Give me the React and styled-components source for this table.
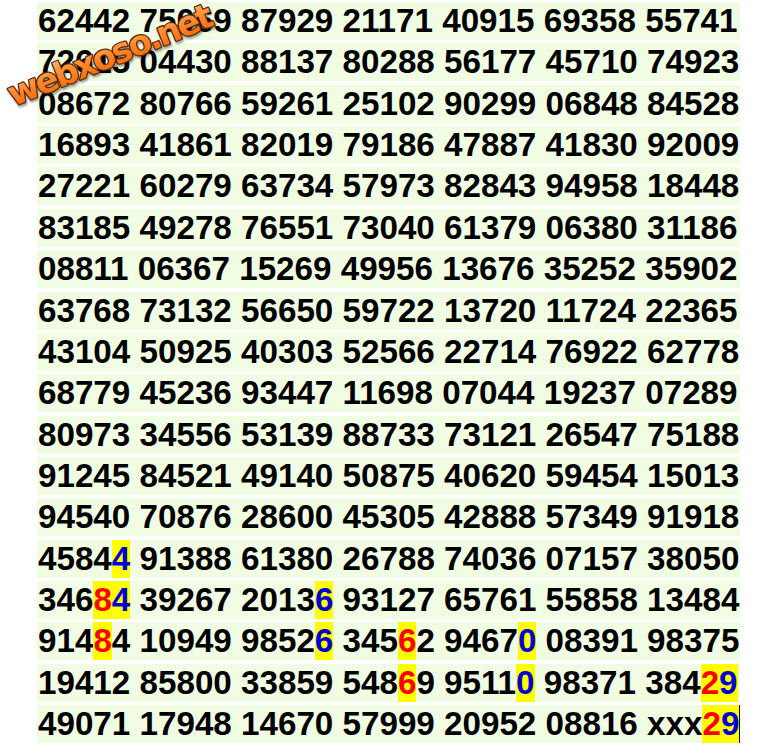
import React from "react";
import styled, { createGlobalStyle } from "styled-components";

const Global = createGlobalStyle`
  html, body { margin: 0; padding: 0; background: #ffffff; }
  body { font-family: "Liberation Sans", Arial, sans-serif; }
`;

const Page = styled.div`
  position: relative;
  width: 768px;
  height: 755px;
  padding: 2px 0 0 37px;
  box-sizing: border-box;
  overflow: hidden;
`;

const Board = styled.div`
  display: flex;
  flex-direction: column;
  gap: 3.36px;
  width: 703px;
`;

const Row = styled.div`
  height: 38px;
  background: #f1fde3;
  padding-left: 1px;
  font-family: "Liberation Sans", Arial, sans-serif;
  font-weight: 700;
  font-size: 33.2px;
  line-height: 38px;
  color: #000000;
  white-space: pre;
  overflow: visible;
`;

const Hit = styled.span`
  display: inline-block;
  height: 38px;
  vertical-align: top;
  background: #ffff00;
  color: ${(p) => (p.$tone === "red" ? "#ff0000" : "#0000d4")};
`;

const Caret = styled.span`
  display: inline-block;
  width: 1px;
  height: 38px;
  vertical-align: top;
  background: #000000;
`;

const Mark = styled.svg`
  position: absolute;
  left: 0;
  top: 0;
  width: 240px;
  height: 120px;
  overflow: visible;
  pointer-events: none;
  filter: drop-shadow(1px 2px 1px rgba(0, 0, 0, 0.4));
`;

const rows = [
  "62442 75069 87929 21171 40915 69358 55741",
  "72615 04430 88137 80288 56177 45710 74923",
  "08672 80766 59261 25102 90299 06848 84528",
  "16893 41861 82019 79186 47887 41830 92009",
  "27221 60279 63734 57973 82843 94958 18448",
  "83185 49278 76551 73040 61379 06380 31186",
  "08811 06367 15269 49956 13676 35252 35902",
  "63768 73132 56650 59722 13720 11724 22365",
  "43104 50925 40303 52566 22714 76922 62778",
  "68779 45236 93447 11698 07044 19237 07289",
  "80973 34556 53139 88733 73121 26547 75188",
  "91245 84521 49140 50875 40620 59454 15013",
  "94540 70876 28600 45305 42888 57349 91918",
  "4584_4 91388 61380 26788 74036 07157 38050",
  "346^8_4 39267 2013_6 93127 65761 55858 13484",
  "914^84 10949 9852_6 345^62 9467_0 08391 98375",
  "19412 85800 33859 548^69 9511_0 98371 384^2_9",
  "49071 17948 14670 57999 20952 08816 xxx^2_9|",
];

function renderRow(text, ri) {
  const out = [];
  let buf = "";
  const flush = () => {
    if (buf) {
      out.push(buf);
      buf = "";
    }
  };
  for (let i = 0; i < text.length; i++) {
    const c = text[i];
    if (c === "^" || c === "_") {
      flush();
      out.push(
        <Hit key={`${ri}-${i}`} $tone={c === "^" ? "red" : "blue"}>
          {text[i + 1]}
        </Hit>
      );
      i++;
    } else if (c === "|") {
      flush();
      out.push(<Caret key={`${ri}-${i}`} />);
    } else {
      buf += c;
    }
  }
  flush();
  return out;
}

export default function App() {
  return (
    <Page>
      <Global />
      <Board>
        {rows.map((r, i) => (
          <Row key={i}>{renderRow(r, i)}</Row>
        ))}
      </Board>
      <Mark viewBox="0 0 240 120">
        <defs>
          <linearGradient id="wm" x1="0" y1="0" x2="0" y2="1">
            <stop offset="0" stopColor="#ffc48a" />
            <stop offset="0.45" stopColor="#ff8c30" />
            <stop offset="1" stopColor="#f06000" />
          </linearGradient>
        </defs>
        <text
          x="109"
          y="55"
          textAnchor="middle"
          dominantBaseline="central"
          transform="rotate(-22 109 55)"
          fontFamily="'DejaVu Sans', Verdana, sans-serif"
          fontWeight="700"
          fontSize="34"
          letterSpacing="-2.6"
          fill="url(#wm)"
          stroke="#5c2600"
          strokeWidth="2.4"
          strokeLinejoin="round"
          paintOrder="stroke fill"
        >
          webxoso.net
        </text>
      </Mark>
    </Page>
  );
}
